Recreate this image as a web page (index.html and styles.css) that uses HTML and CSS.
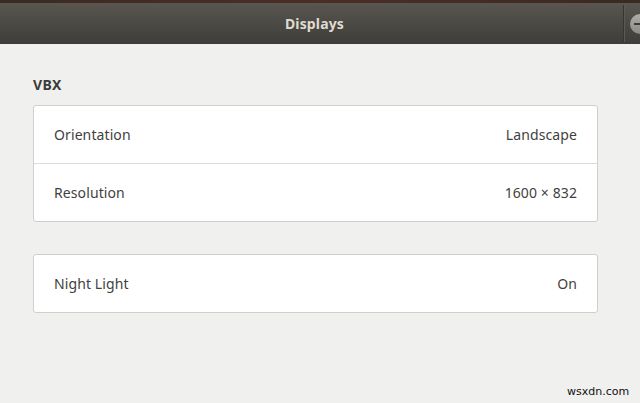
FILE: index.html
```html
<!DOCTYPE html>
<html>
<head>
<meta charset="utf-8">
<link rel="stylesheet" href="styles.css">
</head>
<body>
<div class="window">
  <div class="wallpaper"></div>
  <header class="headerbar">
    <div class="title">Displays</div>
    <div class="sep"></div>
    <div class="ctrl"><span class="dash"></span></div>
  </header>
  <main class="content">
    <h2 class="section">VBX</h2>
    <div class="card">
      <div class="row"><span class="label">Orientation</span><span class="value">Landscape</span></div>
      <div class="row"><span class="label">Resolution</span><span class="value">1600 × 832</span></div>
    </div>
    <div class="card card-gap">
      <div class="row"><span class="label">Night Light</span><span class="value">On</span></div>
    </div>
  </main>
  <div class="watermark">wsxdn.com</div>
</div>
</body>
</html>
```
FILE: styles.css
```css
html, body {
  margin: 0;
  padding: 0;
  width: 640px;
  height: 403px;
  overflow: hidden;
  background: #f0f0ee;
}
.window {
  position: relative;
  width: 640px;
  height: 403px;
  font-family: "Noto Sans", "Open Sans", sans-serif;
  color: #3d3d3b;
}
.wallpaper {
  height: 3px;
  background: linear-gradient(90deg, #3a2a24, #4a2e26 50%, #3a2a22);
}
.headerbar {
  position: relative;
  height: 41px;
  background: linear-gradient(#58564f, #3f3d39);
  display: flex;
  align-items: center;
  justify-content: center;
  padding-right: 11px;
  box-sizing: border-box;
}
.title {
  font-weight: bold;
  font-size: 14px;
  color: #dfdbd2;
  letter-spacing: 0.15px;
}
.sep {
  position: absolute;
  left: 623px;
  top: 2px;
  bottom: 2px;
  width: 1px;
  background: #37352f;
  box-shadow: 1px 0 0 #5c5a54;
}
.ctrl {
  position: absolute;
  left: 630px;
  top: 11px;
  width: 20px;
  height: 20px;
  border-radius: 50%;
  background: linear-gradient(#aeaca6, #8c8a85);
  display: flex;
  align-items: center;
  padding-left: 4px;
  box-sizing: border-box;
}
.dash {
  width: 8px;
  height: 2px;
  background: #3c3b38;
}
.content {
  padding: 0 42px 0 33px;
}
.section {
  margin: 0;
  padding-top: 31px;
  height: 30px;
  font-size: 14px;
  font-weight: bold;
  line-height: 19px;
  color: #3c3c3a;
  letter-spacing: 0.3px;
}
.card {
  background: #fff;
  border: 1px solid #cfcfcd;
  border-radius: 3px;
  width: 563px;
}
.card-gap {
  margin-top: 32px;
}
.row {
  height: 57px;
  display: flex;
  align-items: center;
  justify-content: space-between;
  padding: 0 20px;
  font-size: 14px;
}
.row + .row {
  border-top: 1px solid #dcdcda;
}
.label, .value {
  color: #3f3f3d;
  letter-spacing: 0.1px;
}
.watermark {
  position: absolute;
  left: 567px;
  top: 385px;
  font-family: "DejaVu Sans", sans-serif;
  font-size: 11px;
  color: #111;
}
```
